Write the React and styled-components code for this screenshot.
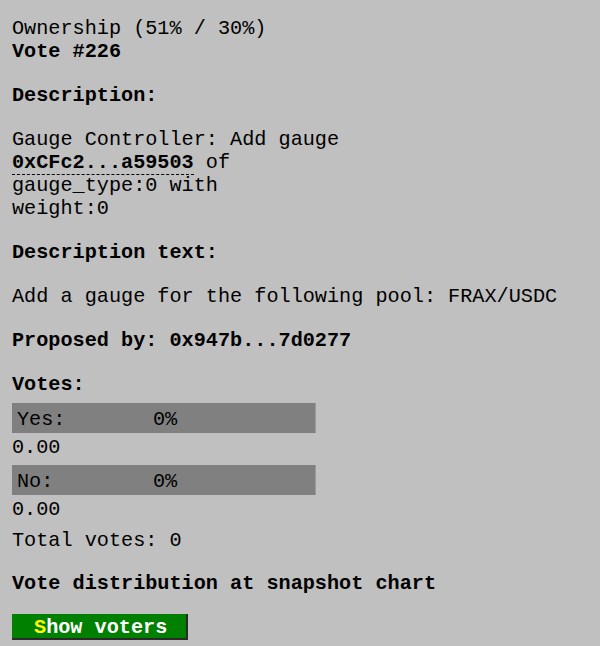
import React from 'react'
import styled, { createGlobalStyle } from 'styled-components'

const Global = createGlobalStyle`
  html, body {
    margin: 0;
    padding: 0;
    background: #c0c0c0;
  }
  body {
    font-family: "Liberation Mono", "Courier New", monospace;
    font-size: 20.2px;
    line-height: 23px;
    color: #000;
  }
`

const Page = styled.div`
  padding: 17px 12px 0;
  min-height: 646px;
  box-sizing: border-box;
`

const Block = styled.div`
  margin-bottom: ${props => props.gap || 21}px;
`

const Line = styled.div`
  font-weight: ${props => props.bold ? 'bold' : 'normal'};
  white-space: pre;
`

const Address = styled.span`
  font-weight: bold;
  border-bottom: 1px dashed #000;
`

const VoteRow = styled.div`
  margin-bottom: ${props => props.gap || 0}px;
`

const Bar = styled.div`
  display: flex;
  width: 304px;
  height: 30px;
  box-sizing: border-box;
  padding: 5px 5px 2px;
  margin-bottom: 3px;
  background: #808080;
  border-right: 1px solid #9a9a9a;
`

const BarLabel = styled.span`
  width: 136px;
`

const Button = styled.button`
  display: block;
  width: 176px;
  height: 26px;
  padding: 2px 0 0 22px;
  text-align: left;
  background: #008000;
  color: #fff;
  font-family: inherit;
  font-size: 20.2px;
  font-weight: bold;
  line-height: 23px;
  border: none;
  border-right: 2px solid #2a2a2a;
  border-bottom: 2px solid #2a2a2a;
  cursor: pointer;
`

const Hot = styled.span`
  color: #ffff00;
`

const votes = [
  { label: 'Yes:', pct: '0%', amount: '0.00' },
  { label: 'No:', pct: '0%', amount: '0.00' },
]

const App = () => {
  return (
    <Page>
      <Global />
      <Block>
        <Line>Ownership (51% / 30%)</Line>
        <Line bold>Vote #226</Line>
      </Block>
      <Block>
        <Line bold>Description:</Line>
      </Block>
      <Block>
        <Line>Gauge Controller: Add gauge</Line>
        <Line><Address>0xCFc2...a59503</Address> of</Line>
        <Line>gauge_type:0 with</Line>
        <Line>weight:0</Line>
      </Block>
      <Block>
        <Line bold>Description text:</Line>
      </Block>
      <Block>
        <Line>Add a gauge for the following pool: FRAX/USDC</Line>
      </Block>
      <Block>
        <Line bold>Proposed by: 0x947b...7d0277</Line>
      </Block>
      <Block gap={7}>
        <Line bold>Votes:</Line>
      </Block>
      {votes.map((v, i) => (
        <VoteRow key={v.label} gap={i === 0 ? 6 : 8}>
          <Bar>
            <BarLabel>{v.label}</BarLabel>
            <span>{v.pct}</span>
          </Bar>
          <Line>{v.amount}</Line>
        </VoteRow>
      ))}
      <Block gap={20}>
        <Line>Total votes: 0</Line>
      </Block>
      <Block gap={19}>
        <Line bold>Vote distribution at snapshot chart</Line>
      </Block>
      <Button><Hot>S</Hot>how voters</Button>
    </Page>
  )
}

export default App
